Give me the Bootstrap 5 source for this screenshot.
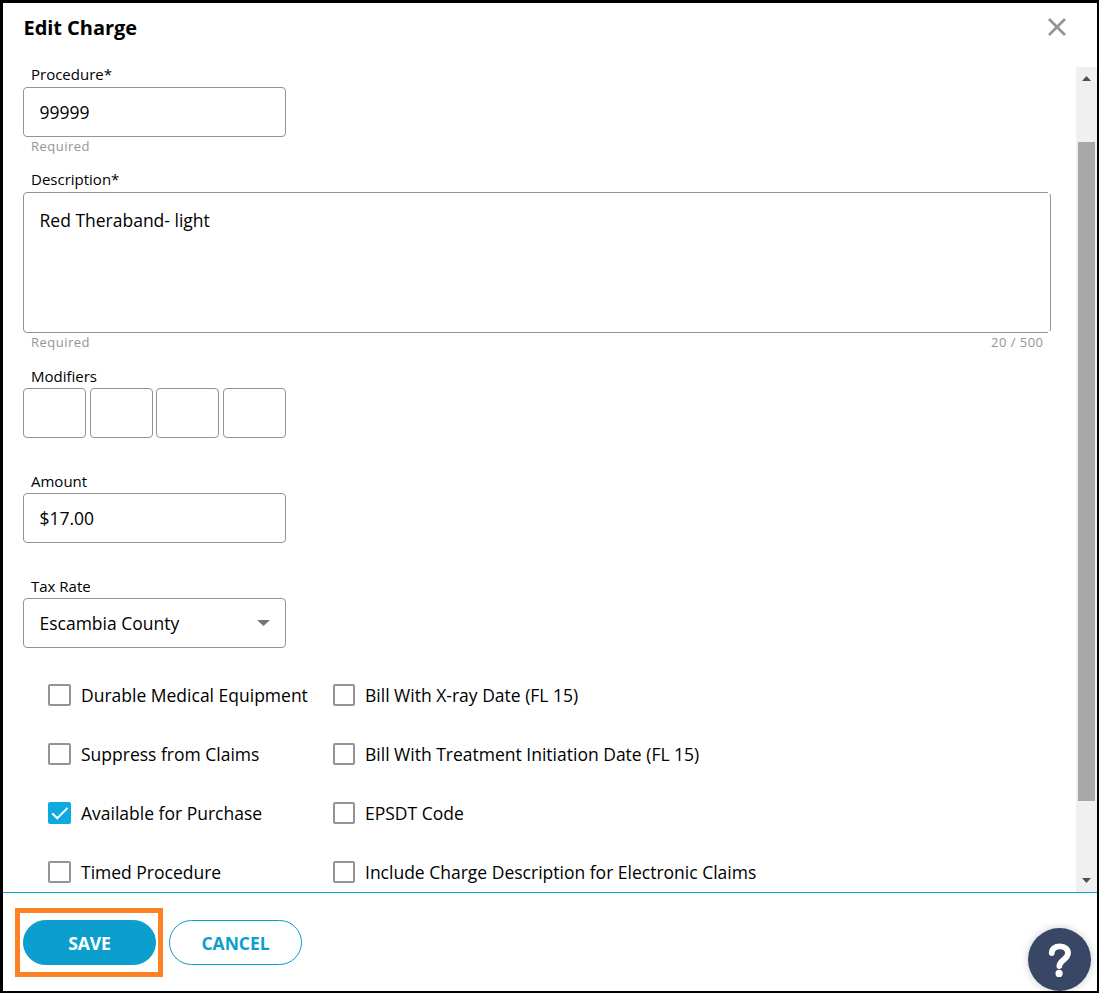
<!DOCTYPE html>
<html lang="en">
<head>
<meta charset="utf-8">
<meta name="viewport" content="width=device-width, initial-scale=1">
<title>Edit Charge</title>
<link href="https://cdn.jsdelivr.net/npm/bootstrap@5.3.0/dist/css/bootstrap.min.css" rel="stylesheet">
<style>
body{font-family:"Open Sans","Noto Sans",sans-serif;color:#000;background:#fff}
.dialog-frame{height:993px;border:3px solid #000;border-right-width:2px;border-bottom-width:2px;overflow:hidden}
.dialog-head{height:64px;padding:13px 30px 0 20.5px}
.dialog-title{font-size:20px;line-height:24px;font-weight:700;letter-spacing:-.05px}
.dialog-scroll{height:825px}
.form-area{padding-left:20px}
.field-label{display:block;font-size:15px;line-height:17px;height:20px;padding-left:8px}
.label-raised{line-height:15px}
.label-spaced{margin-top:17px}
.field-gap{height:55px}
.entry.form-control,.entry.form-select{width:263px;height:50px;border:1px solid #949494;border-radius:4px;padding:0 15.5px;font-size:17.5px;color:#000}
textarea.entry.form-control{width:1028px;height:141px;padding-top:14px;resize:none;display:block;clip-path:polygon(0 0,1025px 0,1025px 2px,1028px 2px,1028px 139px,1025px 139px,1025px 141px,0 141px)}
.entry.modifier{width:63px;padding:0}
.entry.form-select{background-image:url("data:image/svg+xml,%3Csvg xmlns='http://www.w3.org/2000/svg' viewBox='0 0 13 6'%3E%3Cpath d='M0 0h13L6.5 6z' fill='%23757575'/%3E%3C/svg%3E");background-size:13px 6px;background-position:right 15px top 21px}
.modifier-row{width:263px}
.hint{font-size:13px;line-height:18px;letter-spacing:.48px;color:#949494;padding:0 7.5px 0 8px;width:1028px}
.checks{padding-left:25px;padding-top:17px;display:grid;grid-template-columns:285px 1fr}
.checks .form-check{height:59px;margin:0;padding:0;font-size:17.5px}
.checks .form-check-input{float:none;margin:0;width:22px;height:22px;border:2px solid #949494;border-radius:2px;flex:none}
.checks .left .form-check-input{width:23px}
.checks .form-check-input:checked{background-color:#0ea9df;border-color:#0ea9df;background-size:19px 18px;background-image:url("data:image/svg+xml,%3Csvg xmlns='http://www.w3.org/2000/svg' viewBox='0 0 19 18'%3E%3Cpath d='M2.2 9.3l5 5L17.6 3.9' fill='none' stroke='white' stroke-width='2'/%3E%3C/svg%3E")}
.checks label{margin-left:10px;line-height:24px;white-space:nowrap}
.scroll-track{width:21px;background:#f0f0f0;padding:9px 0 9px}
.scroll-thumb{width:17px;height:659px;background:#a8a8a8;margin-top:61px}
.dialog-foot{height:99px;border-top:1px solid #0aa5dc;padding:15px 12px 0}
.save-mark{border:5px solid #ff8126;width:148px;height:69px;padding:7px 2px 7px 3px}
.pill{width:133px;height:45px;font-size:17.5px;font-weight:700;line-height:24px;border-radius:23px;padding:0;letter-spacing:-.05px}
.pill-save,.pill-save:hover{background:#0c9fcd;border-color:#0c9fcd;color:#fff}
.pill-cancel,.pill-cancel:hover{background:#fff;border-color:#0c9fcd;color:#0c9fcd}
.pill-cancel{margin:12px 0 0 6px}
.help-bubble{position:absolute;left:1028px;top:928px;width:63px;height:63px;border-radius:50%;background:#394767;box-shadow:0 0 8px rgba(0,0,0,.2);clip-path:inset(-10px -6px 0 -10px)}
</style>
</head>
<body>
<main class="dialog-frame position-relative">
  <header class="dialog-head d-flex justify-content-between">
    <h1 class="dialog-title m-0">Edit Charge</h1>
    <button class="btn p-0 border-0 d-flex" aria-label="Close"><svg width="20" height="22" viewBox="0 0 20 22"><path d="M2 3L18 19M18 3L2 19" stroke="#949494" stroke-width="2.7"/></svg></button>
  </header>
  <div class="dialog-scroll d-flex justify-content-between">
    <form class="form-area">
      <label class="field-label label-raised" for="procedure">Procedure*</label>
      <input class="form-control entry" id="procedure" value="99999">
      <div class="hint">Required</div>
      <label class="field-label label-raised label-spaced" for="description">Description*</label>
      <textarea class="form-control entry" id="description">Red Theraband- light</textarea>
      <div class="hint d-flex justify-content-between"><span>Required</span><span>20 / 500</span></div>
      <label class="field-label label-spaced" for="mod1">Modifiers</label>
      <div class="modifier-row d-flex justify-content-between">
        <input class="form-control entry modifier" id="mod1"><input class="form-control entry modifier"><input class="form-control entry modifier"><input class="form-control entry modifier">
      </div>
      <div class="field-gap d-flex align-items-end"><label class="field-label" for="amount">Amount</label></div>
      <input class="form-control entry" id="amount" value="$17.00">
      <div class="field-gap d-flex align-items-end"><label class="field-label" for="tax">Tax Rate</label></div>
      <select class="form-select entry" id="tax"><option>Escambia County</option></select>
      <div class="checks">
        <div class="form-check left d-flex align-items-center"><input class="form-check-input" type="checkbox" id="c1"><label for="c1">Durable Medical Equipment</label></div>
        <div class="form-check d-flex align-items-center"><input class="form-check-input" type="checkbox" id="c2"><label for="c2">Bill With X-ray Date (FL 15)</label></div>
        <div class="form-check left d-flex align-items-center"><input class="form-check-input" type="checkbox" id="c3"><label for="c3">Suppress from Claims</label></div>
        <div class="form-check d-flex align-items-center"><input class="form-check-input" type="checkbox" id="c4"><label for="c4">Bill With Treatment Initiation Date (FL 15)</label></div>
        <div class="form-check left d-flex align-items-center"><input class="form-check-input" type="checkbox" id="c5" checked><label for="c5">Available for Purchase</label></div>
        <div class="form-check d-flex align-items-center"><input class="form-check-input" type="checkbox" id="c6"><label for="c6">EPSDT Code</label></div>
        <div class="form-check left d-flex align-items-center"><input class="form-check-input" type="checkbox" id="c7"><label for="c7">Timed Procedure</label></div>
        <div class="form-check d-flex align-items-center"><input class="form-check-input" type="checkbox" id="c8"><label for="c8">Include Charge Description for Electronic Claims</label></div>
      </div>
    </form>
    <div class="scroll-track d-flex flex-column align-items-center">
      <svg width="9" height="5" viewBox="0 0 9 5"><path d="M0 5L4.5 0L9 5z" fill="#505050"/></svg>
      <div class="scroll-thumb"></div>
      <svg class="mt-auto" width="9" height="5" viewBox="0 0 9 5"><path d="M0 0L4.5 5L9 0z" fill="#505050"/></svg>
    </div>
  </div>
  <footer class="dialog-foot d-flex">
    <div class="save-mark"><button class="btn pill pill-save d-block">SAVE</button></div>
    <button class="btn pill pill-cancel">CANCEL</button>
  </footer>
</main>
<div class="help-bubble" role="button" aria-label="Help">
  <svg class="d-block" width="63" height="63" viewBox="0 0 63 63"><path d="M23.7 25C24 20.8 27.2 18.3 31.9 18.3C36.8 18.3 40 21 40 25.2C40 30.8 31.6 32.6 31.4 38" fill="none" stroke="#fff" stroke-width="5.8" stroke-linecap="round"/><circle cx="31.1" cy="45.4" r="3.6" fill="#fff"/></svg>
</div>
<script src="https://cdn.jsdelivr.net/npm/bootstrap@5.3.0/dist/js/bootstrap.bundle.min.js"></script>
</body>
</html>
